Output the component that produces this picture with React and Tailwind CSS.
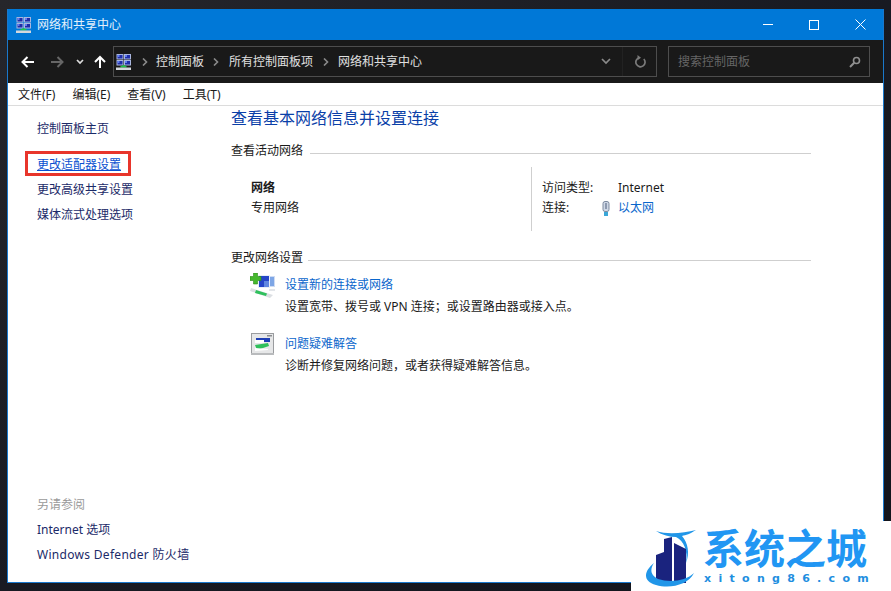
import React from "react";

const Screen = ({ x, y }) => (
  <g>
    <rect x={x} y={y} width="7" height="5.5" fill="#a9b6de" />
    <rect x={x + 1} y={y + 1} width="5" height="3.5" fill="#1f2da8" />
    <rect x={x + 1} y={y + 1} width="2" height="2" fill="#5f7df0" />
  </g>
);

const NetworkIcon = () => (
  <svg width="16" height="16" viewBox="0 0 16 16" className="shrink-0">
    <Screen x={0.5} y={0} />
    <Screen x={8} y={0} />
    <Screen x={0.5} y={6} />
    <Screen x={8} y={6} />
    <rect x="6.5" y="11" width="2" height="2" fill="#1fc24a" />
    <rect x="4.5" y="12" width="6" height="1.5" fill="#1fc24a" />
    <rect x="0" y="13.5" width="15" height="2.5" fill="#d4d8dc" />
  </svg>
);

const Crumb = () => (
  <svg width="6" height="8" viewBox="0 0 6 8" className="shrink-0">
    <path d="M1 0.5 L4.5 4 L1 7.5" fill="none" stroke="#8a8a8a" strokeWidth="1.6" />
  </svg>
);

const SetupIcon = () => (
  <svg width="26" height="26" viewBox="0 0 26 26" className="shrink-0">
    <rect x="15" y="3" width="10" height="11" fill="#cfdcf2" />
    <rect x="16" y="4" width="8" height="9" fill="#7ea6e6" />
    <rect x="8" y="2" width="12" height="13" fill="#e8eef8" />
    <rect x="9" y="3" width="10" height="11" fill="#2545c8" />
    <rect x="14" y="8" width="5" height="6" fill="#5f86e0" />
    <path d="M3.5 0 H7.5 V3.5 H11 V7.5 H7.5 V11 H3.5 V7.5 H0 V3.5 H3.5 Z" fill="#45b82d" stroke="#2c8a1b" strokeWidth="0.6" />
    <path d="M1 15 L23 22 L20 25 L0 18 Z" fill="#dcdfe3" />
    <path d="M6 17 L17 20.5 L16 23 L5 20 Z" fill="#2fc05c" />
    <path d="M19 16 H25 V18 H19 Z" fill="#e3e6ea" />
  </svg>
);

const TroubleIcon = () => (
  <svg width="24" height="23" viewBox="0 0 24 23" className="shrink-0">
    <rect x="0.5" y="0.5" width="22" height="20" fill="#e6e7e8" stroke="#9a9c9f" />
    <rect x="0" y="20" width="23" height="2" fill="#b9bbbd" />
    <rect x="16" y="2" width="5" height="1.5" fill="#8b8d90" />
    <path d="M5 5 L19 5 L19 9 L5 9 Z" fill="#1f3fb5" />
    <path d="M4 7 H13 V10 H4 Z" fill="#ffffff" />
    <path d="M4 12 L17 10 L18 13 L6 17 Z" fill="#2fbf5b" />
    <path d="M4 15 L17 16 L17 17 L4 18 Z" fill="#ffffff" />
  </svg>
);

const SectionTitle = ({ title, lineGap }) => (
  <div className="flex items-start w-[580px] h-4 leading-4">
    <span className="shrink-0 text-[#1a1a1a]">{title}</span>
    <div className={`flex-1 h-px bg-[#cfcfcf] mt-[10px] ${lineGap}`}></div>
  </div>
);

const sideLink = "h-[25px] leading-[25px] text-[#1b2a68]";

const Logo = () => (
  <div className="absolute right-0 bottom-0 w-[260px] h-[70px] bg-white flex items-start pl-[13px] pt-[2px]">
    <svg width="60" height="62" viewBox="0 0 60 62" className="shrink-0 mt-[2px]">
      <path d="M12 6 C24 10 40 8 52 5 C46 9 42 10 38 11 C44 18 46 28 42 38 C44 26 40 16 32 12 C26 12 18 10 12 6 Z" fill="#2196e8" />
      <path d="M28 12 V58 H12 V30 L20 27 V14 Z" fill="#1a237e" />
      <path d="M30 18 L42 24 V58 H30 Z" fill="#1a237e" />
      <path d="M10 38 C0 46 -2 56 12 60 C26 64 44 60 50 48 C42 56 26 58 14 54 C6 50 6 44 10 38 Z" fill="#2196e8" />
    </svg>
    <div className="flex flex-col items-start font-['Noto_Sans_CJK_SC']">
      <div className="text-[41px] leading-[41px] h-[41px] mt-[3px] ml-[-1px] font-bold text-[#2196f3] whitespace-nowrap">系统之城</div>
      <div className="mt-[5px] text-[11px] leading-[13px] font-bold text-[#1f8fe0] tracking-[7.3px] font-['DejaVu_Sans'] whitespace-nowrap">xitong86.com</div>
    </div>
  </div>
);

const App = () => {
  return (
    <div className="relative w-[891px] h-[591px] overflow-hidden bg-gradient-to-br from-[#26262b] via-[#181a22] to-[#12141c] pt-[9px] pl-[7px] text-[12px] font-['Noto_Sans','Noto_Sans_CJK_SC',sans-serif]">
      <div className="w-[877px] h-[574px] flex flex-col border border-[#1a78cc] border-t-0 bg-white">
        {/* title bar */}
        <div className="h-[31px] shrink-0 bg-[#0078d7] flex items-center text-white pl-[8px]">
          <NetworkIcon />
          <span className="ml-[5px] text-[#e4f0fb]">网络和共享中心</span>
          <div className="ml-auto flex items-center h-full">
            <div className="w-[46px] h-full flex items-center justify-center">
              <div className="w-[10px] h-px bg-white"></div>
            </div>
            <div className="w-[46px] h-full flex items-center justify-center">
              <div className="w-[10px] h-[10px] border border-white"></div>
            </div>
            <div className="w-[46px] h-full flex items-center justify-center">
              <svg width="11" height="11" viewBox="0 0 11 11">
                <path d="M0.5 0.5 L10.5 10.5 M10.5 0.5 L0.5 10.5" stroke="#fff" strokeWidth="1" />
              </svg>
            </div>
          </div>
        </div>

        {/* nav bar */}
        <div className="h-[43px] shrink-0 bg-[#191919] flex items-center pl-[13px] text-[#e0e0e0]">
          <svg width="14" height="12" viewBox="0 0 14 12" className="shrink-0">
            <path d="M13 6 H2 M6.5 1 L1.5 6 L6.5 11" fill="none" stroke="#fff" strokeWidth="2" />
          </svg>
          <svg width="14" height="12" viewBox="0 0 14 12" className="shrink-0 ml-[15px]">
            <path d="M1 6 H12 M7.5 1 L12.5 6 L7.5 11" fill="none" stroke="#666" strokeWidth="2" />
          </svg>
          <svg width="8" height="6" viewBox="0 0 8 6" className="shrink-0 ml-[12px]">
            <path d="M1 1 L4 4 L7 1" fill="none" stroke="#ddd" strokeWidth="1.7" />
          </svg>
          <svg width="12" height="14" viewBox="0 0 12 14" className="shrink-0 ml-[10px]">
            <path d="M6 13 V2 M1 7 L6 2 L11 7" fill="none" stroke="#fff" strokeWidth="2" />
          </svg>
          <div className="ml-[7px] w-[544px] h-[31px] border border-[#4d4d4d] flex items-center pl-[2px]">
            <NetworkIcon />
            <div className="ml-[10px]"><Crumb /></div>
            <span className="ml-[8px]">控制面板</span>
            <div className="ml-[9px]"><Crumb /></div>
            <span className="ml-[10px]">所有控制面板项</span>
            <div className="ml-[10px]"><Crumb /></div>
            <span className="ml-[9px]">网络和共享中心</span>
            <svg width="10" height="7" viewBox="0 0 10 7" className="ml-auto mr-[11px]">
              <path d="M1 1 L5 5 L9 1" fill="none" stroke="#8a8a8a" strokeWidth="1.7" />
            </svg>
            <div className="w-[34px] h-full border-l border-[#222] flex items-center justify-center">
              <svg width="12" height="13" viewBox="0 0 12 13">
                <path d="M9.8 4 A4.6 4.6 0 1 1 5 2.8" fill="none" stroke="#7a7a7a" strokeWidth="1.7" />
                <path d="M3.5 0 L7 2.8 L3.5 5.2 Z" fill="#7a7a7a" />
              </svg>
            </div>
          </div>
          <div className="ml-[11px] w-[202px] h-[31px] border border-[#4d4d4d] flex items-center pl-[9px] pr-[8px]">
            <span className="text-[#666]">搜索控制面板</span>
            <svg width="12" height="12" viewBox="0 0 12 12" className="ml-auto">
              <circle cx="7.5" cy="4.5" r="3" fill="none" stroke="#8f8f8f" strokeWidth="1.6" />
              <path d="M5.2 6.8 L1 11" stroke="#8f8f8f" strokeWidth="2" />
            </svg>
          </div>
        </div>

        {/* menu bar */}
        <div className="h-[23px] shrink-0 border-b border-[#dcdcdc] flex items-center pl-[10px] pt-[2px] gap-[17px] text-[#1a1a1a]">
          <span>文件(F)</span>
          <span>编辑(E)</span>
          <span>查看(V)</span>
          <span>工具(T)</span>
        </div>

        {/* body */}
        <div className="flex flex-1 min-h-0">
          <div className="w-[223px] shrink-0 pl-[29px] pt-[10px] pb-[15px] flex flex-col">
            <div className={sideLink}>控制面板主页</div>
            <div className="relative mt-[11px] h-[25px] leading-[25px] text-[#0a50d0] underline">
              更改适配器设置
              <div className="absolute left-[-12px] top-[-1px] w-[106px] h-[25px] border-[3px] border-[#e8352b]"></div>
            </div>
            <div className={sideLink}>更改高级共享设置</div>
            <div className={sideLink}>媒体流式处理选项</div>
            <div className="mt-auto h-[25px] leading-[25px] text-[#9a9a9a]">另请参阅</div>
            <div className={sideLink}>Internet 选项</div>
            <div className={`${sideLink} tracking-[0.3px]`}>Windows Defender 防火墙</div>
          </div>

          <div className="flex-1 flex flex-col items-start">
            <h1 className="text-[16px] leading-6 text-[#0a3fa8]">查看基本网络信息并设置连接</h1>
            <div className="mt-[13px]">
              <SectionTitle title="查看活动网络" lineGap="ml-[7px]" />
            </div>
            <div className="mt-[8px] h-[64px] flex">
              <div className="w-[301px] border-r border-[#cfcfcf] pl-[20px] pt-[11px] leading-5 text-[#1a1a1a]">
                <div className="font-bold">网络</div>
                <div>专用网络</div>
              </div>
              <div className="pl-[10px] pt-[11px] leading-5 text-[#1a1a1a]">
                <div className="flex">
                  <span className="w-[76px]">访问类型:</span>
                  <span>Internet</span>
                </div>
                <div className="flex items-center">
                  <span className="w-[60px]">连接:</span>
                  <svg width="8" height="15" viewBox="0 0 8 15" className="shrink-0">
                    <rect x="1" y="0.5" width="6" height="10" rx="2" fill="#cfd8e6" stroke="#7c8aa0" />
                    <rect x="3" y="2" width="2" height="6" fill="#8d9ab0" />
                    <rect x="2" y="11" width="4" height="4" fill="#3ba7d8" />
                  </svg>
                  <span className="ml-[8px] text-[#0a66cc]">以太网</span>
                </div>
              </div>
            </div>
            <div className="mt-[19px]">
              <SectionTitle title="更改网络设置" lineGap="ml-[5px]" />
            </div>
            <div className="mt-[11px] flex w-full">
              <div className="ml-[19px] mt-[-4px] w-[35px]"><SetupIcon /></div>
              <div>
                <div className="leading-4 text-[#0a66cc]">设置新的连接或网络</div>
                <div className="mt-[6px] leading-4 text-[#1a1a1a]">设置宽带、拨号或 VPN 连接；或设置路由器或接入点。</div>
              </div>
            </div>
            <div className="mt-[21px] flex w-full">
              <div className="ml-[20px] mt-[-3px] w-[34px]"><TroubleIcon /></div>
              <div>
                <div className="leading-4 text-[#0a66cc]">问题疑难解答</div>
                <div className="mt-[6px] leading-4 text-[#1a1a1a]">诊断并修复网络问题，或者获得疑难解答信息。</div>
              </div>
            </div>
          </div>
        </div>
      </div>
      <Logo />
    </div>
  );
};

export default App;
